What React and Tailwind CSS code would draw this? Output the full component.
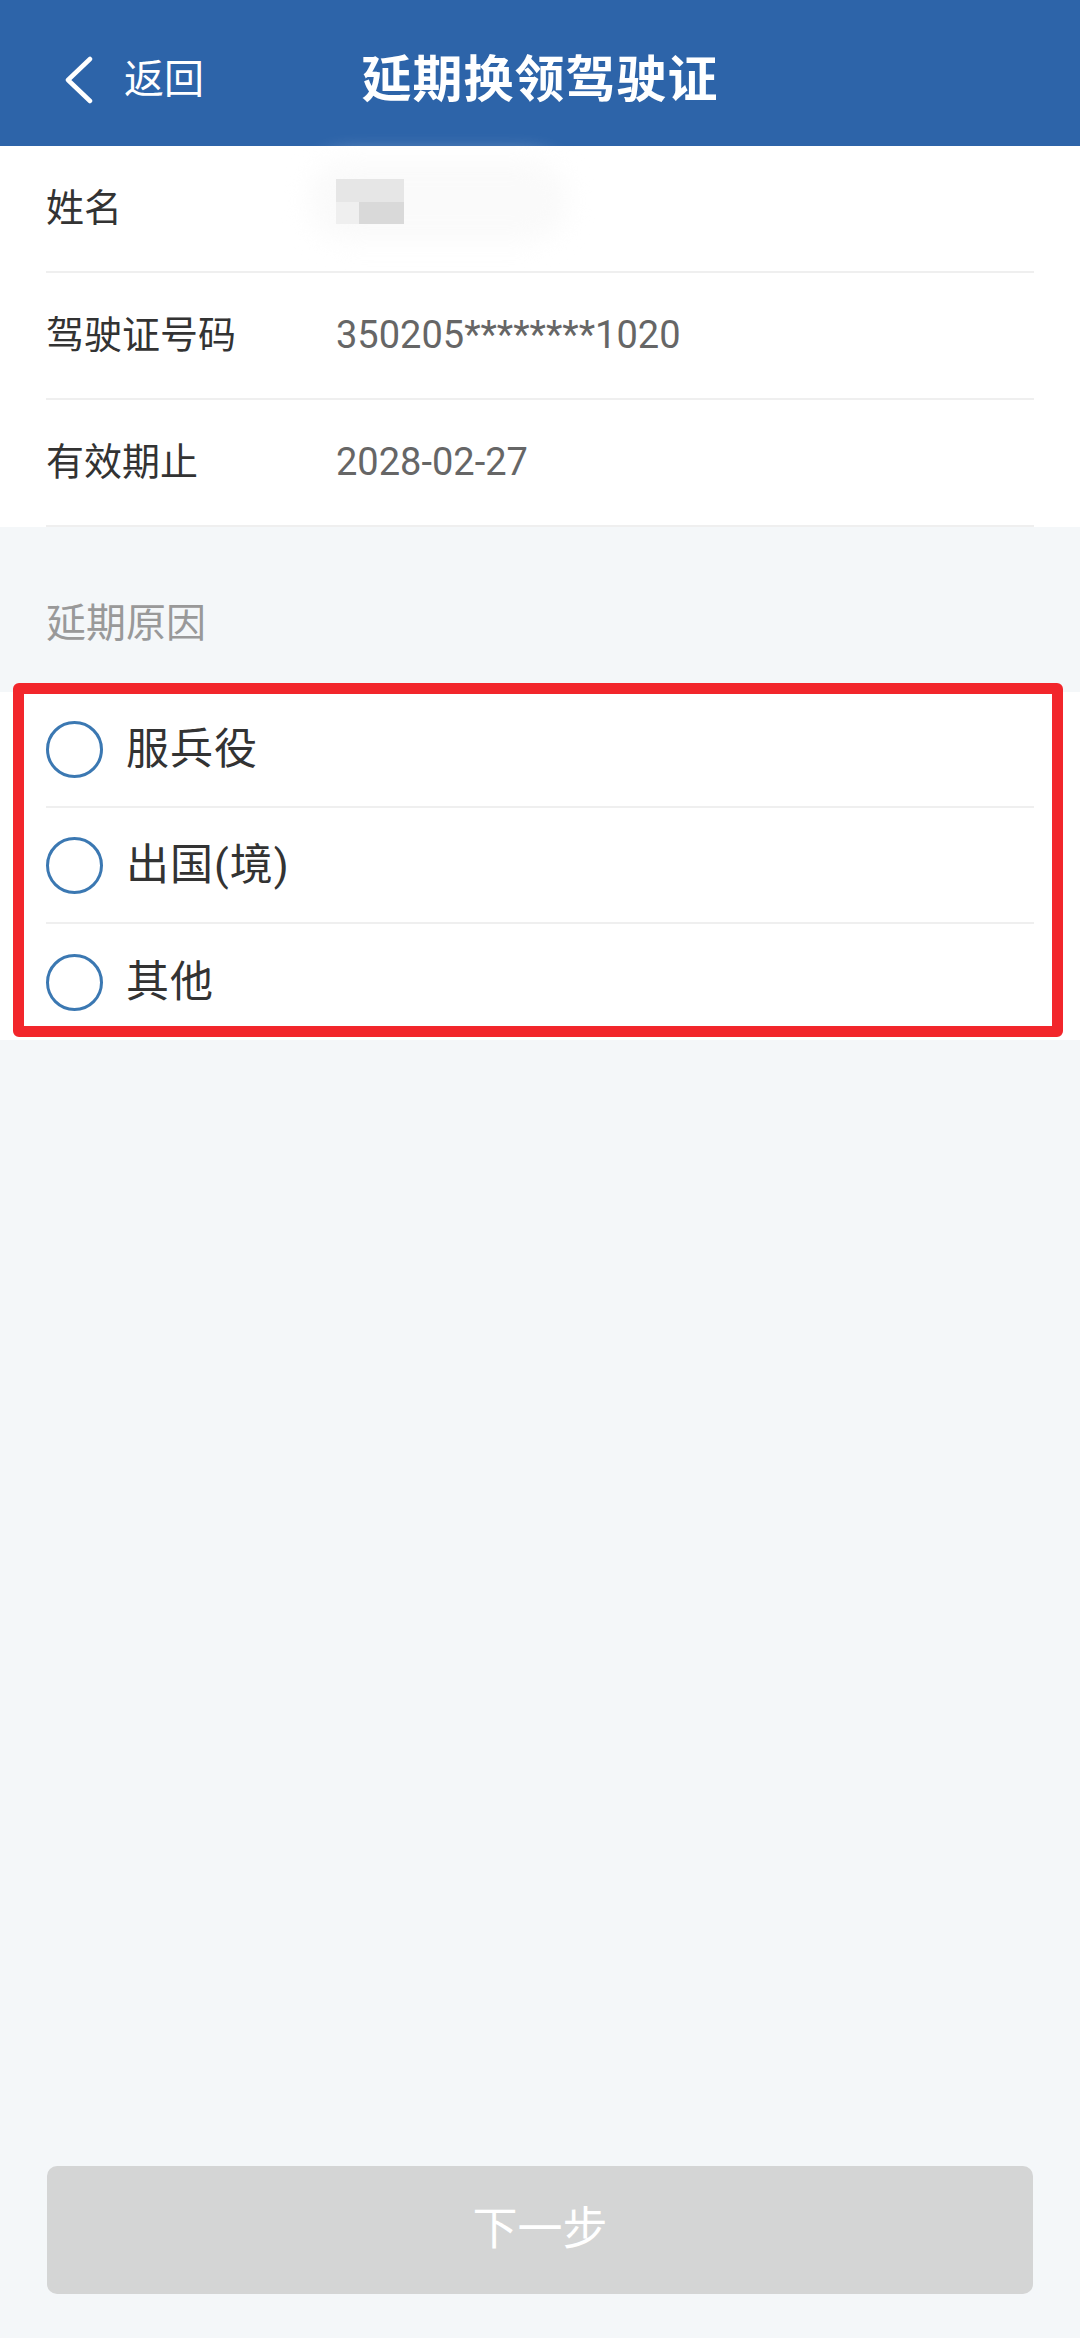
import { useState } from 'react';

const FONT = 'font-[Roboto,"Noto_Sans_CJK_SC",sans-serif]';

const info = [
  { label: '驾驶证号码', value: '350205********1020' },
  { label: '有效期止', value: '2028-02-27' },
];

const reasons = ['服兵役', '出国(境)', '其他'];

// masked name: a small pixelated block with a soft halo
function MaskedName() {
  return (
    <div className="relative h-[45px] w-[68px] -translate-y-[7px]">
      <div className="absolute -left-[28px] -top-[18px] h-[80px] w-[260px] rounded-full bg-[#fafafa] blur-md" />
      <div className="relative grid h-full w-full grid-cols-[23px_45px] grid-rows-2">
        <div className="col-span-2 bg-[#e6e6e6]" />
        <div className="bg-[#efefef]" />
        <div className="bg-[#d9d9d9]" />
      </div>
    </div>
  );
}

export default function App() {
  const [picked, setPicked] = useState(null);

  return (
    <div className={`${FONT} flex min-h-screen flex-col bg-[#f4f7f9]`}>
      {/* Title bar */}
      <header className="grid h-[146px] grid-cols-[1fr_auto_1fr] items-center bg-[#2d64a9] pt-[14px] text-white">
        <button className="flex items-center gap-[30px] pl-[64px]">
          <svg width="30" height="48" viewBox="0 0 30 48" fill="none">
            <polyline
              points="26,3 4,24 26,45"
              stroke="white"
              strokeWidth="4.5"
              strokeLinecap="round"
              strokeLinejoin="round"
            />
          </svg>
          <span className="text-[40px] leading-none">返回</span>
        </button>
        <h1 className="text-[50px] font-bold leading-none tracking-[1px]">延期换领驾驶证</h1>
        <div />
      </header>

      {/* Licence details */}
      <section className="bg-white px-[46px]">
        <div className="flex h-[127px] items-center border-b-2 border-[#efefef]">
          <span className="w-[290px] text-[38px] text-[#333]">姓名</span>
          <MaskedName />
        </div>
        {info.map((row) => (
          <div key={row.label} className="flex h-[127px] items-center border-b-2 border-[#efefef]">
            <span className="w-[290px] text-[38px] text-[#333]">{row.label}</span>
            <span className="text-[38px] text-[#666]">{row.value}</span>
          </div>
        ))}
      </section>

      <div className="flex h-[165px] items-center px-[46px] pt-[28px]">
        <span className="text-[40px] text-[#999]">延期原因</span>
      </div>

      {/* Reason options */}
      <section className="relative bg-white px-[46px]">
        {reasons.map((r, i) => (
          <label
            key={r}
            onClick={() => setPicked(i)}
            className={`flex h-[116px] items-center gap-[23px] ${i < reasons.length - 1 ? 'border-b-2 border-[#efefef]' : ''}`}
          >
            <span className="flex h-[57px] w-[57px] items-center justify-center rounded-full border-[3px] border-[#3b78b2]">
              {picked === i && <span className="h-[30px] w-[30px] rounded-full bg-[#3b78b2]" />}
            </span>
            <span className="text-[43px] tracking-[1px] text-[#333]">{r}</span>
          </label>
        ))}
        <div className="pointer-events-none absolute -top-[9px] bottom-[3px] left-[13px] right-[17px] rounded-[6px] border-[11px] border-[#f2262b]" />
      </section>

      <div className="flex-1" />

      <div className="px-[47px] pb-[44px]">
        <button className="flex h-[128px] w-full items-center justify-center rounded-[10px] bg-[#d4d5d5] text-[45px] text-white">
          下一步
        </button>
      </div>
    </div>
  );
}
